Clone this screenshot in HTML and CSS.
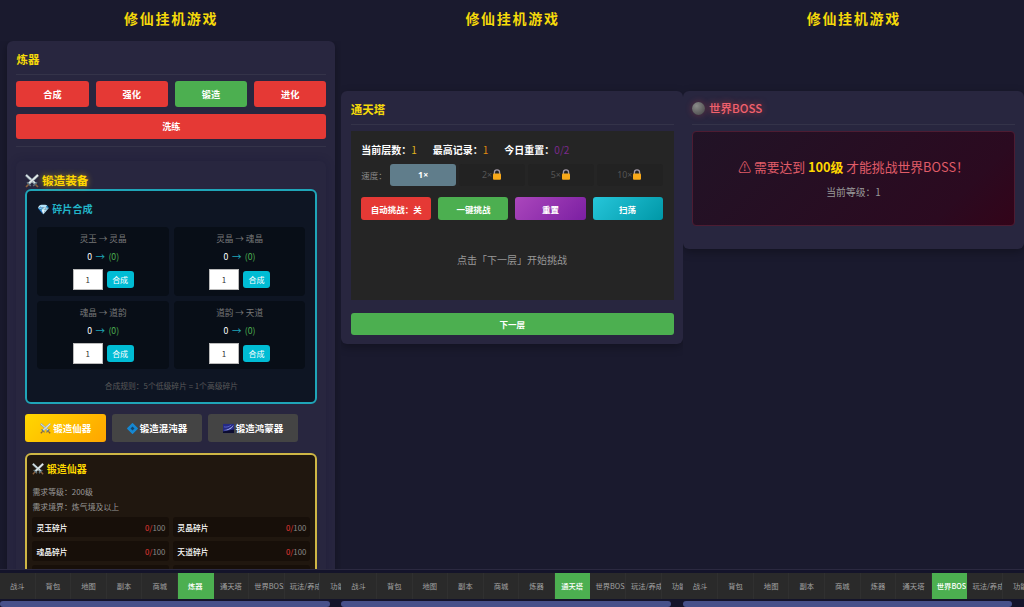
FILE: index.html
```
<!DOCTYPE html>
<html lang="zh-CN">
<head>
    <meta charset="UTF-8">
    <meta name="viewport" content="width=device-width, initial-scale=1.0">
    <title>修仙挂机游戏</title>
    <link rel="stylesheet" href="styles.css">
</head>
<body>
    <svg class="sprite">
        <symbol id="swords" viewBox="0 0 14 14">
            <path d="M1 1 10.5 10" stroke="#8fa0a8" stroke-width="2.6"/>
            <path d="M1 1 10.5 9.2" stroke="#dfe7ea" stroke-width="1.2"/>
            <path d="M13 1 3.5 10" stroke="#a9b7bd" stroke-width="2.6"/>
            <path d="M13 1 3.8 9.4" stroke="#eef2f3" stroke-width="1.2"/>
            <path d="M2 8.2 5.8 12M12 8.2 8.2 12" stroke="#60757f" stroke-width="1.5"/>
            <path d="M3.4 10.6 1 13M10.6 10.6 13 13" stroke="#8a5f3c" stroke-width="1.6"/>
        </symbol>
        <symbol id="lock" viewBox="0 0 10 11">
            <path d="M2.4 5V3.4a2.6 2.6 0 0 1 5.2 0V5" fill="none" stroke="#a59aa8" stroke-width="1.3"/>
            <rect x="1" y="4.4" width="8" height="6.3" rx="1" fill="#f9a91a"/>
        </symbol>
    </svg>

    <div class="screens">
        <!-- 炼器 -->
        <section class="screen">
            <h1>修仙挂机游戏</h1>
            <main class="content">
                <div class="card forge-card">
                    <h2>炼器</h2>
                    <div class="forge-tabs">
                        <button class="btn red">合成</button>
                        <button class="btn red">强化</button>
                        <button class="btn green">锻造</button>
                        <button class="btn red">进化</button>
                        <button class="btn red wide">洗练</button>
                    </div>
                    <div class="forge-panel">
                        <h3 class="forge-title"><svg class="icon-lg"><use href="#swords"/></svg> 锻造装备</h3>
                        <div class="shard-box">
                            <h4><span class="emoji">💎</span> 碎片合成</h4>
                            <div class="shard-grid">
                                <div class="shard">
                                    <p class="shard-name">灵玉 → 灵晶</p>
                                    <p class="shard-count">0 <i>→</i> <b>(0)</b></p>
                                    <div class="shard-form"><input type="text" value="1"><button>合成</button></div>
                                </div>
                                <div class="shard">
                                    <p class="shard-name">灵晶 → 魂晶</p>
                                    <p class="shard-count">0 <i>→</i> <b>(0)</b></p>
                                    <div class="shard-form"><input type="text" value="1"><button>合成</button></div>
                                </div>
                                <div class="shard">
                                    <p class="shard-name">魂晶 → 道韵</p>
                                    <p class="shard-count">0 <i>→</i> <b>(0)</b></p>
                                    <div class="shard-form"><input type="text" value="1"><button>合成</button></div>
                                </div>
                                <div class="shard">
                                    <p class="shard-name">道韵 → 天道</p>
                                    <p class="shard-count">0 <i>→</i> <b>(0)</b></p>
                                    <div class="shard-form"><input type="text" value="1"><button>合成</button></div>
                                </div>
                            </div>
                            <p class="shard-rule">合成规则：5个低级碎片 = 1个高级碎片</p>
                        </div>
                        <div class="type-tabs">
                            <button class="type-btn gold"><svg class="icon"><use href="#swords"/></svg> 锻造仙器</button>
                            <button class="type-btn">
                                <svg class="icon" viewBox="0 0 12 12"><path d="M6 .8 11.2 6 6 11.2.8 6z" fill="#1688d2" stroke="#1688d2" stroke-width="1.4" stroke-linejoin="round"/><path d="M6 3.8 8.2 6 6 8.2 3.8 6z" fill="#12456e"/></svg>
                                锻造混沌器
                            </button>
                            <button class="type-btn">
                                <svg class="icon" viewBox="0 0 12 12"><path d="M0 1h12v10H0z" fill="#252a83"/><path d="M0 9.2 12 7v4H0z" fill="#0c0c30"/><path d="M.5 7.6C4 7.8 8 6 11.5 2.2 10.4 5.6 6 9.2.5 7.6z" fill="#a9b3f2"/><path d="M1 4.2C4 5 7 4 9 2" fill="none" stroke="#5964cb" stroke-width="1"/></svg>
                                锻造鸿蒙器
                            </button>
                        </div>
                        <div class="recipe">
                            <h4><svg class="icon-md"><use href="#swords"/></svg> 锻造仙器</h4>
                            <p>需求等级：200级</p>
                            <p>需求境界：炼气境及以上</p>
                            <div class="cost-grid">
                                <div class="cost"><b>灵玉碎片</b><span><em>0/</em>100</span></div>
                                <div class="cost"><b>灵晶碎片</b><span><em>0/</em>100</span></div>
                                <div class="cost"><b>魂晶碎片</b><span><em>0/</em>100</span></div>
                                <div class="cost"><b>天道碎片</b><span><em>0/</em>100</span></div>
                                <div class="cost"></div>
                                <div class="cost"></div>
                            </div>
                        </div>
                    </div>
                </div>
            </main>
            <nav class="bottom-nav">
                <div class="tabs">
                    <a>战斗</a><a>背包</a><a>地图</a><a>副本</a><a>商城</a><a class="active">炼器</a><a>通天塔</a><a>世界BOSS</a><a>玩法/养成</a><a>功能</a>
                </div>
                <div class="scrollbar"></div>
            </nav>
        </section>

        <!-- 通天塔 -->
        <section class="screen">
            <h1>修仙挂机游戏</h1>
            <main class="content">
                <div class="card tower-card">
                    <h2>通天塔</h2>
                    <div class="tower-box">
                        <div class="tower-stats">
                            <span>当前层数：<i class="gold-text">1</i></span>
                            <span>最高记录：<i class="orange-text">1</i></span>
                            <span>今日重置：<i class="purple-text">0/2</i></span>
                        </div>
                        <div class="speed">
                            <label>速度：</label>
                            <button class="active">1×</button>
                            <button>2×<svg class="lock"><use href="#lock"/></svg></button>
                            <button>5×<svg class="lock"><use href="#lock"/></svg></button>
                            <button>10×<svg class="lock"><use href="#lock"/></svg></button>
                        </div>
                        <div class="tower-actions">
                            <button class="btn red">自动挑战：关</button>
                            <button class="btn green">一键挑战</button>
                            <button class="btn purple">重置</button>
                            <button class="btn cyan">扫荡</button>
                        </div>
                        <p class="tower-tip">点击「下一层」开始挑战</p>
                    </div>
                    <button class="btn green next-floor">下一层</button>
                </div>
            </main>
            <nav class="bottom-nav">
                <div class="tabs">
                    <a>战斗</a><a>背包</a><a>地图</a><a>副本</a><a>商城</a><a>炼器</a><a class="active">通天塔</a><a>世界BOSS</a><a>玩法/养成</a><a>功能</a>
                </div>
                <div class="scrollbar"></div>
            </nav>
        </section>

        <!-- 世界BOSS -->
        <section class="screen">
            <h1>修仙挂机游戏</h1>
            <main class="content">
                <div class="card boss-card">
                    <h2><span class="moon"></span>世界BOSS</h2>
                    <div class="boss-box">
                        <p class="boss-warn"><span class="warn">⚠</span> 需要达到 <b>100级</b> 才能挑战世界BOSS！</p>
                        <p class="boss-level">当前等级：1</p>
                    </div>
                </div>
            </main>
            <nav class="bottom-nav">
                <div class="tabs">
                    <a>战斗</a><a>背包</a><a>地图</a><a>副本</a><a>商城</a><a>炼器</a><a>通天塔</a><a class="active">世界BOSS</a><a>玩法/养成</a><a>功能</a>
                </div>
                <div class="scrollbar"></div>
            </nav>
        </section>
    </div>
</body>
</html>
```

FILE: styles.css
```
* {
    box-sizing: border-box;
    margin: 0;
    padding: 0;
}

body {
    background-color: #1a1a2e;
    color: #fff;
    font-family: "Noto Sans CJK SC", sans-serif;
    overflow: hidden;
}

button,
input {
    font-family: inherit;
    border: none;
}

i,
em {
    font-style: normal;
}

.sprite {
    display: none;
}

.emoji {
    font-family: "Noto Color Emoji", sans-serif;
    font-weight: normal;
}

.icon {
    width: 11px;
    height: 11px;
    vertical-align: -2px;
}

.icon-md {
    width: 12px;
    height: 12px;
    vertical-align: -2px;
}

.icon-lg {
    width: 14px;
    height: 14px;
    vertical-align: -3px;
}

.lock {
    width: 10px;
    height: 11px;
    vertical-align: -2px;
}

.screens {
    display: grid;
    grid-template-columns: repeat(3, 1fr);
    height: 607px;
}

.screen {
    display: flex;
    flex-direction: column;
    min-width: 0;
    height: 607px;
}

h1 {
    height: 41px;
    flex: none;
    line-height: 37px;
    text-align: center;
    text-indent: 1px;
    font-size: 14px;
    letter-spacing: 1.7px;
    color: #f5d90a;
}

.content {
    flex: 1;
    min-height: 0;
    overflow: hidden;
}

.card {
    background-color: #28263f;
    border-radius: 6px;
    padding: 0 9px 0 9.4px;
    box-shadow: 0 3px 10px rgba(0, 0, 0, 0.3);
}

h2 {
    height: 34px;
    line-height: 36px;
    font-size: 11.5px;
    color: #f5d90a;
    border-bottom: 1px solid #343349;
}

.btn {
    height: 25.5px;
    border-radius: 3px;
    color: #fff;
    font-size: 9.2px;
    font-weight: bold;
}

.red {
    background-color: #e53935;
}

.green {
    background-color: #4caf50;
}

.purple {
    background: linear-gradient(135deg, #ab47bc, #7b1fa2);
}

.cyan {
    background: linear-gradient(135deg, #26c6da, #0097a7);
}

/* forge */
.forge-card {
    margin: 0 6px 0 7px;
    height: 700px;
}

.forge-tabs {
    display: grid;
    grid-template-columns: repeat(4, 1fr);
    gap: 7px;
    padding: 6px 0 7px;
    border-bottom: 1px solid #343349;
}

.wide {
    grid-column: 1 / -1;
}

.forge-panel {
    margin-top: 14px;
    padding: 10px 9px;
    border-radius: 6px;
    box-shadow: 0 0 8px rgba(20, 20, 50, 0.3);
}

.forge-title {
    height: 18px;
    line-height: 18px;
    font-size: 11.6px;
    color: #ffd700;
    text-shadow: 0 0 6px rgba(255, 215, 0, 0.6);
}

.shard-box {
    height: 215px;
    padding: 9px 10px 0;
    border: 2px solid #1fa5b8;
    border-radius: 6px;
    background-color: #0e1523;
}

.shard-box h4 {
    height: 27px;
    line-height: 18px;
    font-size: 10.1px;
    color: #22b4c7;
}

.shard-grid {
    display: grid;
    grid-template-columns: 1fr 1fr;
    gap: 5px;
}

.shard {
    height: 68.5px;
    border-radius: 4px;
    background-color: #080e17;
    text-align: center;
}

.shard-name {
    height: 20px;
    line-height: 22px;
    font-size: 8.6px;
    color: #777;
}

.shard-count {
    height: 22px;
    line-height: 18px;
    font-size: 8.7px;
}

.shard-count i {
    margin: 0 1.5px;
    font-size: 9.5px;
    color: #1fa5b8;
}

.shard-count b {
    font-weight: normal;
    color: #4caf50;
}

.shard-form {
    display: flex;
    align-items: center;
    justify-content: center;
    gap: 4px;
}

.shard-form input {
    width: 30px;
    height: 21px;
    border: 1px solid #bbb;
    text-align: center;
    font-size: 8px;
    color: #333;
}

.shard-form button {
    width: 27px;
    height: 17px;
    border-radius: 3px;
    background-color: #00bcd4;
    color: #fff;
    font-size: 8px;
}

.shard-rule {
    margin-top: 10px;
    line-height: 13px;
    text-align: center;
    font-size: 7.8px;
    color: #5a5a5a;
}

.type-tabs {
    display: flex;
    gap: 6px;
    margin: 10px 0 11px;
}

.type-btn {
    width: 90px;
    height: 28px;
    border-radius: 3px;
    background-color: #444;
    color: #fff;
    font-size: 9.5px;
    font-weight: bold;
    white-space: nowrap;
}

.type-btn.gold {
    width: 80.5px;
    background: linear-gradient(135deg, #ffd700, #ffa500);
}

.recipe {
    height: 200px;
    padding: 5px 5px 0;
    border: 2px solid #ceb645;
    border-radius: 6px;
    background-color: #20170f;
}

.recipe h4 {
    height: 24px;
    line-height: 17px;
    font-size: 10px;
    color: #ffd700;
}

.recipe p {
    height: 15px;
    line-height: 16px;
    font-size: 7.9px;
    color: #999;
}

.cost-grid {
    display: grid;
    grid-template-columns: 1fr 1fr;
    gap: 4px;
    margin-top: 3px;
}

.cost {
    display: flex;
    justify-content: space-between;
    align-items: center;
    height: 20px;
    padding: 0 4px;
    border-radius: 3px;
    background-color: #170f09;
    font-size: 7.8px;
}

.cost b {
    font-weight: 500;
}

.cost span {
    color: #888;
}

.cost em {
    color: #e53935;
}

/* tower */
.tower-card {
    height: 253px;
    margin-top: 50px;
}

.tower-box {
    height: 169px;
    margin-top: 6px;
    padding: 10px 11px 0 10.5px;
    background-color: #252525;
}

.tower-stats {
    display: flex;
    gap: 16px;
    height: 23px;
    line-height: 18px;
    font-size: 10px;
    font-weight: bold;
}

.tower-stats i {
    font-weight: normal;
}

.gold-text {
    color: #e0b41c;
}

.orange-text {
    color: #e08a10;
}

.purple-text {
    color: #7b2a8c;
}

.speed {
    display: flex;
    gap: 3px;
}

.speed label {
    width: 26px;
    line-height: 22px;
    font-size: 8.5px;
    color: #888;
}

.speed button {
    flex: 1;
    height: 22px;
    border-radius: 3px;
    background-color: #222;
    color: #555;
    font-family: "Noto Sans", "Noto Sans CJK SC", sans-serif;
    font-size: 8.8px;
    line-height: 22px;
}

.speed button.active {
    background-color: #607d8b;
    color: #fff;
    font-weight: bold;
}

.tower-actions {
    display: grid;
    grid-template-columns: repeat(4, 1fr);
    gap: 7px;
    margin-top: 11px;
}

.tower-actions .btn {
    height: 23px;
    font-size: 8.5px;
}

.tower-tip {
    margin-top: 31px;
    line-height: 18px;
    text-align: center;
    font-size: 10px;
    color: #999;
}

.next-floor {
    display: block;
    width: 100%;
    height: 22px;
    margin-top: 13px;
    font-size: 8.5px;
}

/* boss */
.boss-card {
    height: 158px;
    margin-top: 50px;
}

.boss-card h2 {
    display: flex;
    align-items: center;
    color: #f0616d;
    font-weight: 500;
    text-shadow: 0 0 7px rgba(255, 70, 70, 0.6);
}

.moon {
    width: 13px;
    height: 13px;
    margin: 2px 4px 0 0;
    border-radius: 50%;
    background: radial-gradient(circle at 35% 30%, #8b8b89, #666 50%, #454545);
    box-shadow: 0 0 7px rgba(255, 70, 70, 0.3);
}

.boss-box {
    height: 95px;
    margin-top: 6px;
    padding-top: 24px;
    border: 1px solid #4d1c32;
    border-radius: 4px;
    background: linear-gradient(135deg, #211326, #2b0a20 80%, #330419);
    text-align: center;
}

.boss-warn {
    line-height: 22px;
    font-size: 12.8px;
    color: #e05c68;
}

.boss-warn b {
    color: #ffd700;
}

.boss-level {
    margin-top: 5px;
    line-height: 19px;
    font-size: 9.8px;
    color: #999;
}

/* bottom nav */
.bottom-nav {
    height: 38px;
    flex: none;
    padding-top: 3px;
    border-top: 1px solid #2b2940;
    background-color: #14142a;
}

.tabs {
    display: flex;
    height: 26px;
    overflow: hidden;
    background-color: #2a2a2a;
}

.tabs a {
    flex: none;
    width: 35.6px;
    padding-left: 5px;
    padding-right: 5px;
    border-right: 1px solid #303030;
    line-height: 26px;
    text-align: center;
    font-size: 7.3px;
    color: #a2a2a2;
    white-space: nowrap;
    overflow: hidden;
}

.tabs a.active {
    border-color: #4caf50;
    background-color: #4caf50;
    color: #fff;
    font-weight: 500;
}

.scrollbar {
    width: 329.5px;
    height: 6px;
    margin-top: 2px;
    border-radius: 3px;
    background-color: #47518a;
}
```
